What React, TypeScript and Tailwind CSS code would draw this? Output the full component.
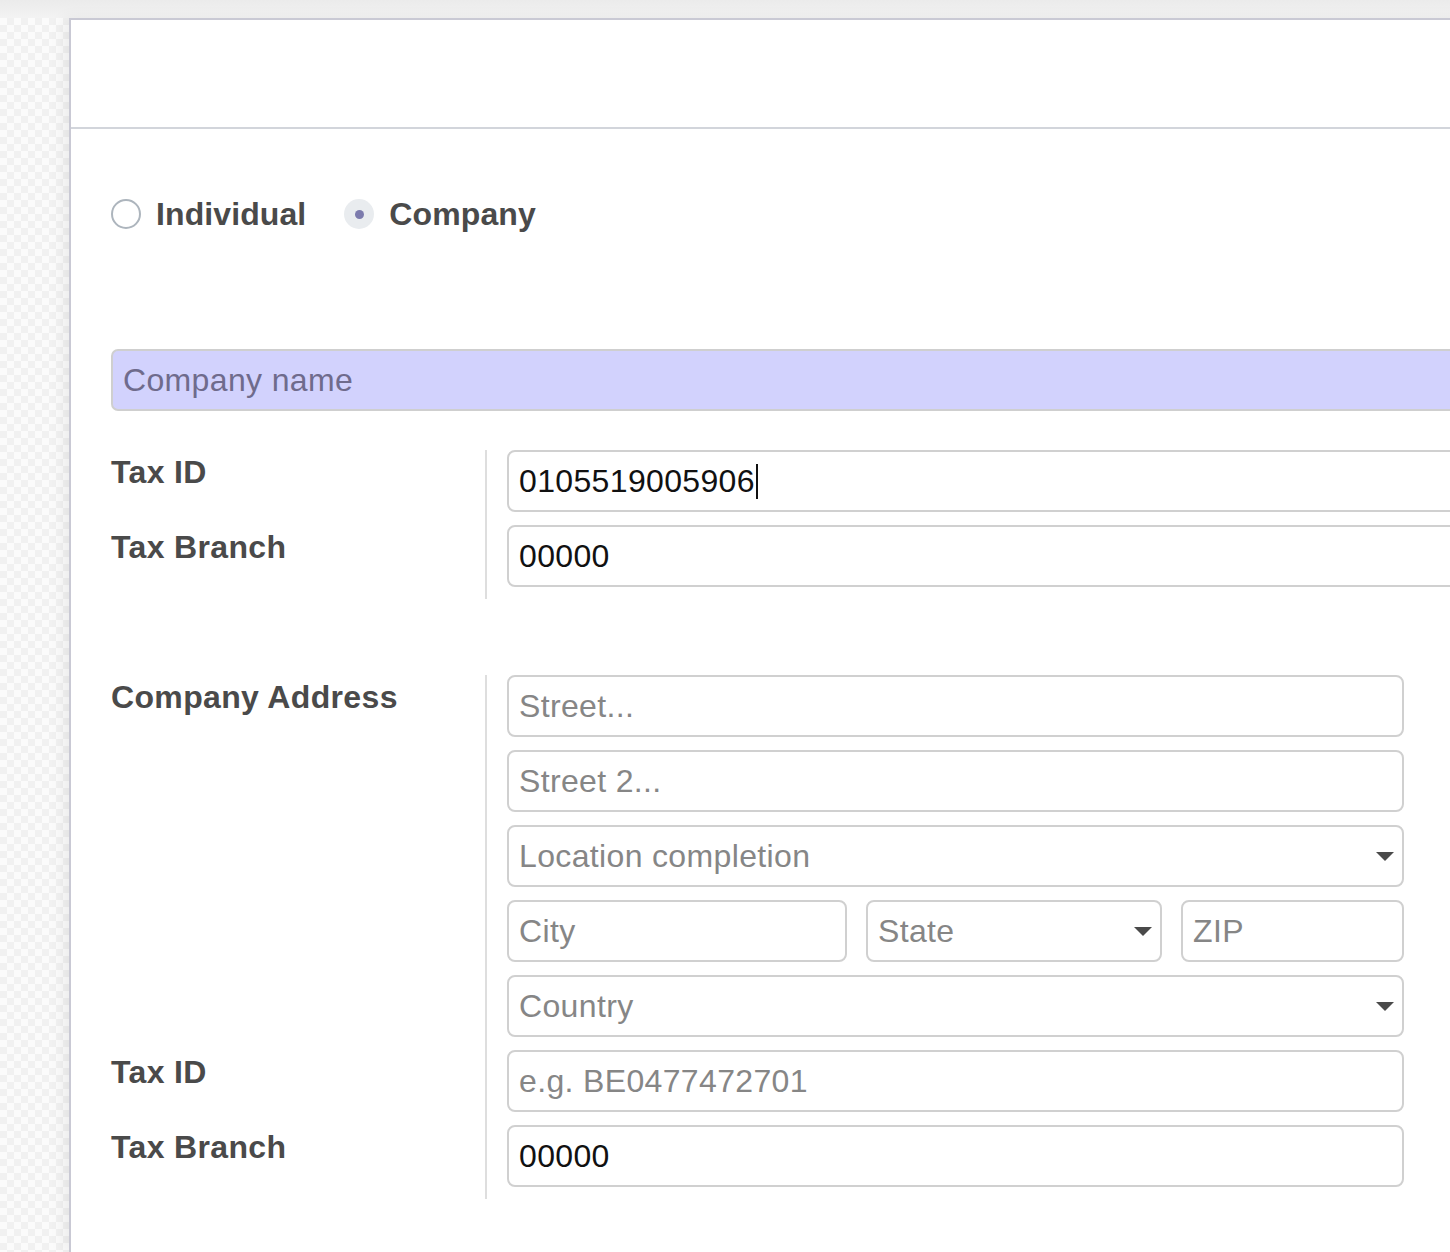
import React from 'react';

const font = "font-['Liberation_Sans',Arial,sans-serif] tracking-[0.35px]";

const Caret: React.FC = () => (
  <svg width="18" height="9" viewBox="0 0 18 9" className="shrink-0">
    <path d="M0 0h18L9 9z" fill="#4a4a4a" />
  </svg>
);

type FieldProps = {
  placeholder?: string;
  value?: string;
  caret?: boolean;
  cursor?: boolean;
  className?: string;
};

const Field: React.FC<FieldProps> = ({ placeholder, value, caret, cursor, className = '' }) => (
  <div
    className={`h-[62px] flex items-center rounded-[8px] border-2 border-[#d0d0d0] bg-white pl-[10px] pr-[8px] text-[32px] ${className}`}
  >
    <span className={`flex-1 whitespace-nowrap leading-none ${value ? 'text-[#111]' : 'text-[#868686]'}`}>
      {value ?? placeholder}
      {cursor && <span className="inline-block w-[2px] h-[35px] bg-[#111] align-[-7px] ml-[1px]" />}
    </span>
    {caret && <Caret />}
  </div>
);

const Label: React.FC<{ children?: React.ReactNode }> = ({ children }) => (
  <div className="h-[61px] leading-[44px] text-[32px] font-bold text-[#4a4a4a] whitespace-nowrap">{children}</div>
);

const App: React.FC = () => {
  return (
    <div className={`w-[1450px] h-[1252px] overflow-hidden flex flex-col bg-[#f2f2f2] ${font}`}>
      <div className="h-[18px] shrink-0 bg-gradient-to-b from-[#ebebeb] to-[#f3f3f3]" />
      <div className="flex flex-1 min-h-0">
        <div className="w-[69px] shrink-0 bg-[repeating-conic-gradient(#f1f1f1_0_25%,#fbfbfb_0_50%)] bg-[length:14px_14px]" />
        <div className="w-[1500px] shrink-0 bg-white border-l-2 border-t-2 border-[#c9c9d4] shadow-[-6px_0_14px_rgba(0,0,0,0.06)]">
          <div className="h-[109px] border-b-2 border-[#d2d5db]" />

          <div className="pl-[40px] pt-[70px]">
            {/* partner type */}
            <div className="flex items-center h-[30px] text-[32px] font-bold text-[#4a4a4a] tracking-[0.1px]">
              <span className="w-[30px] h-[30px] rounded-full border-2 border-[#adb5bd] bg-white" />
              <span className="ml-[15px]">Individual</span>
              <span className="ml-[38px] w-[30px] h-[30px] rounded-full bg-[#e9ecef] flex items-center justify-center">
                <span className="w-[9px] h-[9px] rounded-full bg-[#7c7bad]" />
              </span>
              <span className="ml-[15px]">Company</span>
            </div>

            {/* company name */}
            <div className="mt-[120px] h-[62px] w-[1420px] flex items-center rounded-[7px] border-2 border-[#cfcfcf] bg-[#d2d2fd] pl-[10px] text-[32px] text-[#6f6b8c]">
              Company name
            </div>

            {/* tax */}
            <div className="mt-[39px] flex">
              <div className="w-[374px] shrink-0 flex flex-col gap-[14px]">
                <Label>Tax ID</Label>
                <Label>Tax Branch</Label>
              </div>
              <div className="border-l-2 border-[#dedede] pl-[20px] pb-[12px] flex flex-col gap-[13px]">
                <Field value="0105519005906" cursor className="w-[1000px]" />
                <Field value="00000" className="w-[1000px]" />
              </div>
            </div>

            {/* address */}
            <div className="mt-[76px] flex">
              <div className="w-[374px] shrink-0 flex flex-col gap-[14px]">
                <Label>Company Address</Label>
                <Label />
                <Label />
                <Label />
                <Label />
                <Label>Tax ID</Label>
                <Label>Tax Branch</Label>
              </div>
              <div className="w-[919px] border-l-2 border-[#dedede] pl-[20px] pb-[12px] flex flex-col gap-[13px]">
                <Field placeholder="Street..." />
                <Field placeholder="Street 2..." />
                <Field placeholder="Location completion" caret />
                <div className="flex">
                  <Field placeholder="City" className="w-[340px]" />
                  <Field placeholder="State" caret className="w-[296px] ml-[19px]" />
                  <Field placeholder="ZIP" className="w-[223px] ml-[19px]" />
                </div>
                <Field placeholder="Country" caret />
                <Field placeholder="e.g. BE0477472701" />
                <Field value="00000" />
              </div>
            </div>
          </div>
        </div>
      </div>
    </div>
  );
};

export default App;
